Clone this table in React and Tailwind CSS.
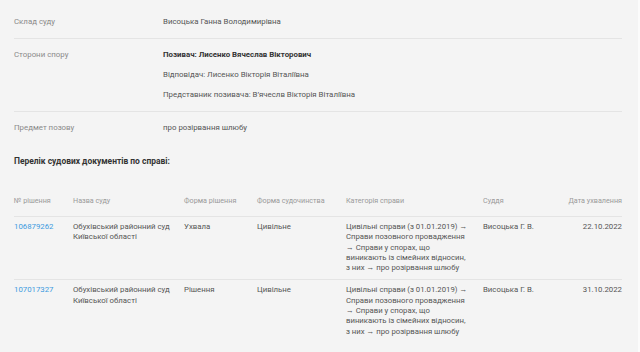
import React from 'react';

const info = [
  { label: 'Склад суду', values: [{ text: 'Висоцька Ганна Володимирівна' }] },
  {
    label: 'Сторони спору',
    values: [
      { text: 'Позивач: Лисенко Вячеслав Вікторович', bold: true },
      { text: 'Відповідач: Лисенко Вікторія Віталіївна' },
      { text: 'Представник позивача: В’ячеслв Вікторія Віталіївна' },
    ],
  },
  { label: 'Предмет позову', values: [{ text: 'про розірвання шлюбу' }] },
];

const category =
  'Цивільні справи (з 01.01.2019) → Справи позовного провадження → Справи у спорах, що виникають із сімейних відносин, з них → про розірвання шлюбу';

const docs = [
  { num: '106879262', court: 'Обухівський районний суд Київської області', form: 'Ухвала', kind: 'Цивільне', judge: 'Висоцька Г. В.', date: '22.10.2022' },
  { num: '107017327', court: 'Обухівський районний суд Київської області', form: 'Рішення', kind: 'Цивільне', judge: 'Висоцька Г. В.', date: '31.10.2022' },
];

const cols = 'grid grid-cols-[59px_111px_73px_89px_137px_1fr_auto]';

export default function App() {
  return (
    <div className="flex w-[640px] h-[352px] overflow-hidden bg-[#f4f4f4] font-['Roboto',sans-serif]">
      <div className="flex-1 pl-[14px] pr-[16px] pt-[6px]">
        {/* Case info */}
        {info.map((row, i) => (
          <div
            key={row.label}
            className={`flex py-[10px] ${i < info.length - 1 ? 'border-b border-[#e4e4e4]' : ''}`}
          >
            <div className="w-[149px] text-[7.87px] leading-[12px] text-[#8a8a8a]">{row.label}</div>
            <div className="flex flex-col gap-[8px]">
              {row.values.map((v) => (
                <div
                  key={v.text}
                  className={`text-[7.87px] leading-[12px] ${v.bold ? 'font-bold text-[#333]' : 'text-[#555]'}`}
                >
                  {v.text}
                </div>
              ))}
            </div>
          </div>
        ))}

        <h3 className="mt-[11px] text-[8.45px] leading-[12px] font-bold text-[#333]">
          Перелік судових документів по справі:
        </h3>

        {/* Documents table */}
        <div className={`${cols} mt-[28px] pb-[9px] border-b border-[#e4e4e4] text-[7.2px] leading-[12px] text-[#9a9a9a]`}>
          <div>№ рішення</div>
          <div>Назва суду</div>
          <div>Форма рішення</div>
          <div>Форма судочинства</div>
          <div>Категорія справи</div>
          <div>Суддя</div>
          <div className="text-right">Дата ухвалення</div>
        </div>
        {docs.map((d, i) => (
          <div
            key={d.num}
            className={`${cols} pt-[5px] pb-[6px] text-[7.8px] leading-[10.3px] text-[#555] ${i < docs.length - 1 ? 'border-b border-[#e4e4e4]' : ''}`}
          >
            <div className="text-[#3d9be0]">{d.num}</div>
            <div className="pr-[10px]">{d.court}</div>
            <div>{d.form}</div>
            <div>{d.kind}</div>
            <div className="w-[123px] text-[7.75px]">{category}</div>
            <div>{d.judge}</div>
            <div className="text-right">{d.date}</div>
          </div>
        ))}
      </div>
      <div className="w-[2px] bg-[#fbfbfb]" />
    </div>
  );
}
